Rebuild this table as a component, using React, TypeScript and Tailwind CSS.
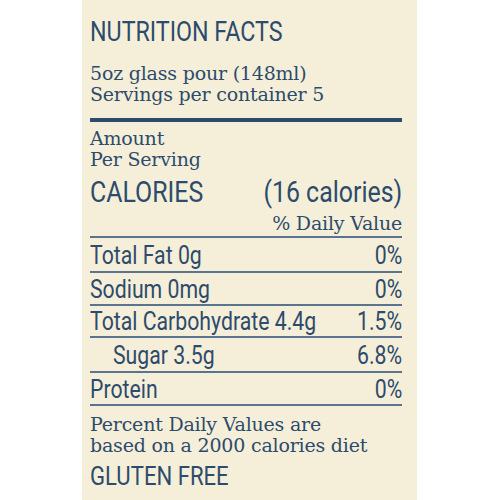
import React from 'react';

const serif = "font-['DejaVu_Serif',serif] tracking-[-0.2px]";

// narrow sans: Roboto squeezed horizontally, the picture uses a condensed face
const Narrow = ({
  children,
  right = false,
  className = 'scale-x-[0.85]',
}: {
  children: React.ReactNode;
  right?: boolean;
  className?: string;
}) => (
  <span
    className={`inline-block whitespace-nowrap font-['Roboto',sans-serif] font-[450] ${
      right ? 'origin-right' : 'origin-left'
    } ${className}`}
  >
    {children}
  </span>
);

const Rule = ({ thick = false }: { thick?: boolean }) => (
  <div className={thick ? 'h-[4px] bg-[#2d4b6c]' : 'h-[2px] bg-[#5a7490]'} />
);

const NutrientRow = ({
  label,
  value,
  height,
  indent = false,
}: {
  label: string;
  value: string;
  height: string;
  indent?: boolean;
}) => (
  <div className={`flex items-center ${height} text-[25px] leading-[31px]`}>
    <div className="flex-1 min-w-0">
      <Narrow className={indent ? 'scale-x-[0.85] ml-[23px]' : 'scale-x-[0.85]'}>{label}</Narrow>
    </div>
    <div className="shrink-0">
      <Narrow right>{value}</Narrow>
    </div>
  </div>
);

const App = () => {
  return (
    <div className="w-[500px] h-[500px] bg-white flex">
      <div className="ml-[82px] w-[335px] h-[500px] bg-[#f5efd9] pl-[8px] pr-[15px] text-[#2d4b6c] flex flex-col">
        <h1 className="pt-[16px] text-[28px] leading-[28px]">
          <Narrow className="scale-x-[0.83]">NUTRITION FACTS</Narrow>
        </h1>

        <div className={`${serif} mt-[17px] text-[19px] leading-[21px]`}>
          <p>5oz glass pour (148ml)</p>
          <p>Servings per container 5</p>
        </div>

        <div className="mt-[13px]">
          <Rule thick />
        </div>

        <div className={`${serif} mt-[6px] text-[19px] leading-[21px]`}>
          <p>Amount</p>
          <p>Per Serving</p>
        </div>

        <div className="mt-[6px] flex items-baseline text-[30px] leading-[30px]">
          <div className="flex-1 min-w-0">
            <Narrow className="scale-x-[0.83]">CALORIES</Narrow>
          </div>
          <div className="shrink-0">
            <Narrow right className="scale-x-[0.83]">(16 calories)</Narrow>
          </div>
        </div>

        <p className={`${serif} mt-[5px] text-right text-[19px] leading-[22px]`}>% Daily Value</p>

        <div className="mt-[2px]">
          <Rule />
        </div>

        <NutrientRow label="Total Fat 0g" value="0%" height="h-[33px]" />
        <Rule />
        <NutrientRow label="Sodium 0mg" value="0%" height="h-[31px]" />
        <Rule />
        <NutrientRow label="Total Carbohydrate 4.4g" value="1.5%" height="h-[30px]" />
        <Rule />
        <NutrientRow label="Sugar 3.5g" value="6.8%" height="h-[33px]" indent />
        <Rule />
        <NutrientRow label="Protein" value="0%" height="h-[31px]" />
        <Rule />

        <div className={`${serif} mt-[8px] text-[19px] leading-[21px]`}>
          <p>Percent Daily Values are</p>
          <p>based on a 2000 calories diet</p>
        </div>

        <p className="mt-[6px] text-[26px] leading-[26px]">
          <Narrow>GLUTEN FREE</Narrow>
        </p>
      </div>
    </div>
  );
};

export default App;
